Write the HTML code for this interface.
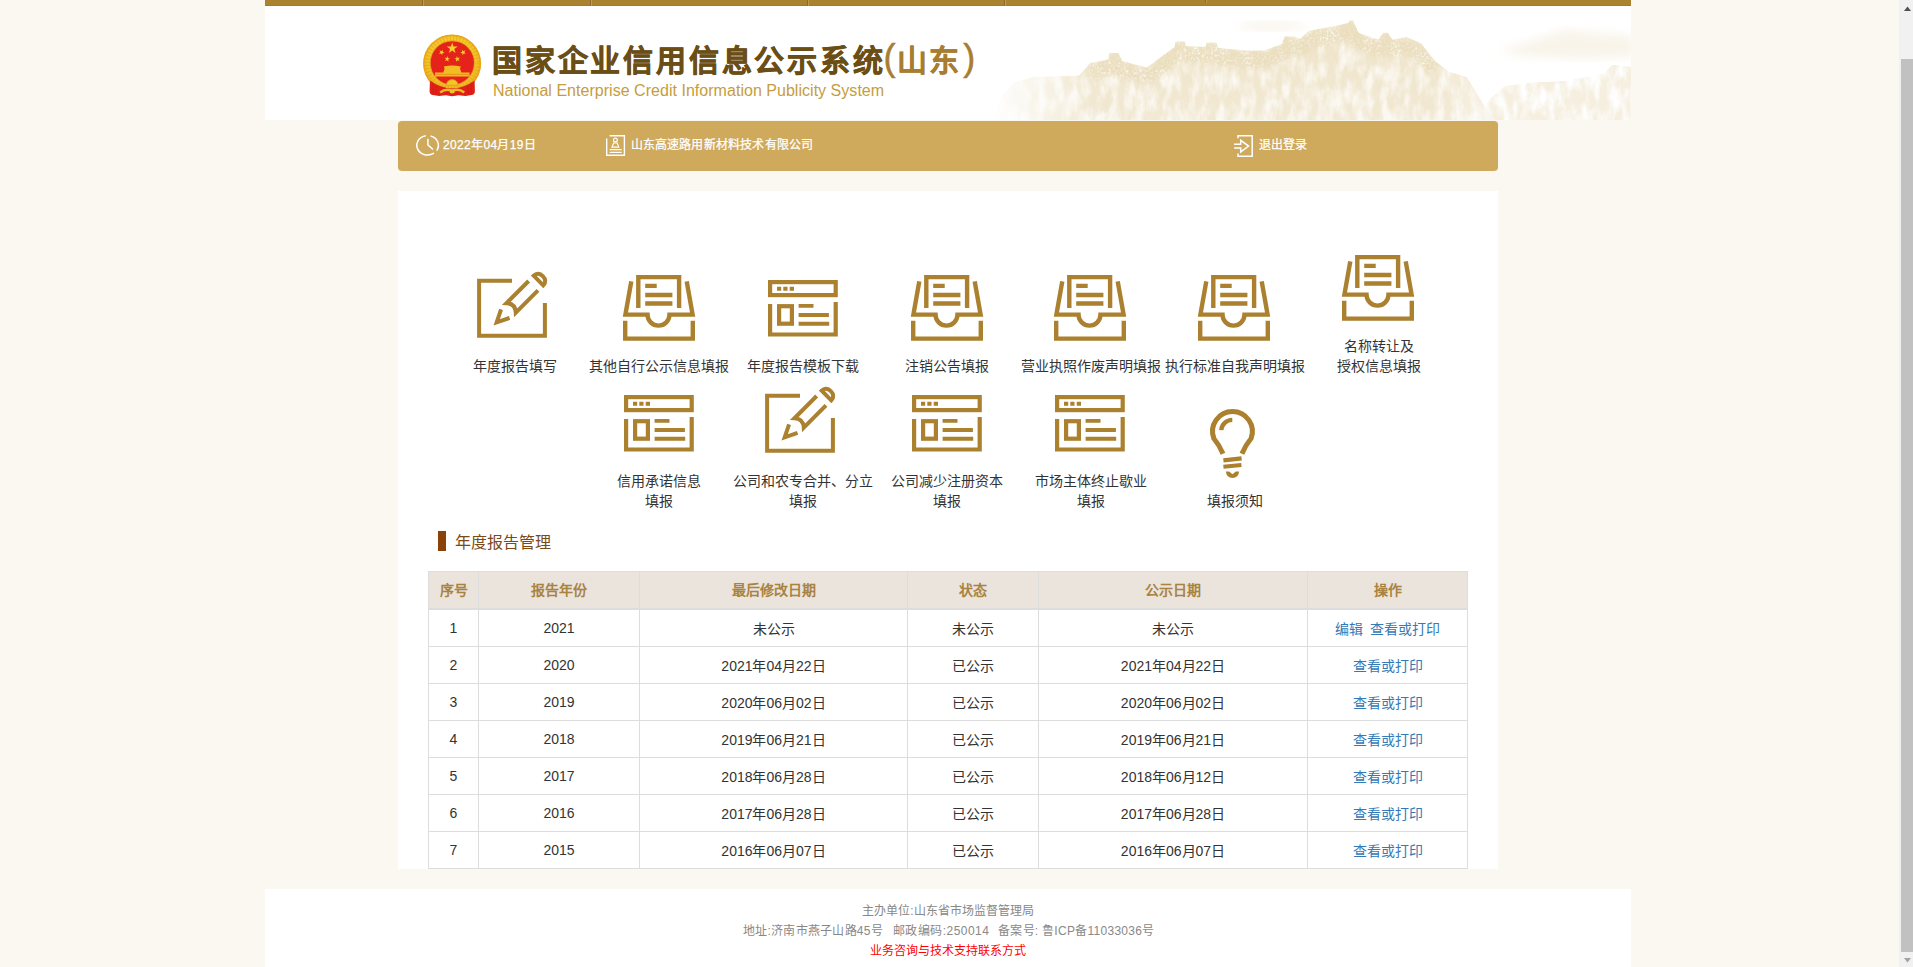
<!DOCTYPE html>
<html lang="zh-CN">
<head>
<meta charset="utf-8">
<title>国家企业信用信息公示系统(山东)</title>
<style>
*{box-sizing:border-box;margin:0;padding:0}
html,body{width:1913px;height:967px;overflow:hidden}
body{position:relative;background:#fbf8f1;font-family:"Liberation Sans",sans-serif;font-size:14px;color:#333}
.abs{position:absolute}
a{text-decoration:none;color:#337ab7}
/* top nav strip */
#topbar{left:265px;top:0;width:1366px;height:6px;background:#ab8230;border-bottom:1px solid #a67a22}
#topbar i{position:absolute;top:0;width:2px;height:6px;background:linear-gradient(90deg,#8d6a25 50%,#c39a4a 50%)}
/* header */
#header{left:265px;top:6px;width:1366px;height:114px;background:#fff;overflow:hidden}
#title{left:492px;top:41px;height:40px;line-height:40px;font-size:30px;font-weight:bold;color:#6b4e16;letter-spacing:2.8px;white-space:nowrap;-webkit-text-stroke:0.6px #6b4e16}
#title span{color:#a87d2f;font-weight:bold;-webkit-text-stroke:0.3px #a87d2f;margin-left:-2px}
#title b:first-child{margin-right:1px}
#title b:last-child{margin-left:1px}
#title b{font-size:36px;line-height:1px;font-weight:normal;position:relative;top:-1.5px;letter-spacing:0;-webkit-text-stroke:0.5px #a87d2f}
#subtitle{left:493px;top:81px;height:20px;line-height:20px;font-size:16px;letter-spacing:0.03px;color:#c59d3d;white-space:nowrap}
/* gold bar */
#bar{left:398px;top:121px;width:1100px;height:50px;background:#cfa95c;border-radius:4px}
.bt{position:absolute;top:136px;height:18px;line-height:18px;font-size:12px;color:#fff;white-space:nowrap;-webkit-text-stroke:.25px #fff}
/* panel */
#panel{left:398px;top:191px;width:1100px;height:678px;background:#fff}
.lbl{position:absolute;width:160px;text-align:center;font-size:14px;line-height:20px;color:#333;white-space:nowrap}
.ico{position:absolute;overflow:visible}
#secbar{left:438px;top:531px;width:8px;height:20px;background:#8b4208}
#sectitle{left:455px;top:532px;height:22px;line-height:22px;font-size:16px;color:#7a4a17;white-space:nowrap}
/* table */
#tbl{left:428px;top:571px;width:1040px;border-collapse:separate;border-spacing:0;border-top:1px solid #ddd;border-left:1px solid #ddd;table-layout:fixed;background:#fff}
#tbl th,#tbl td{border-right:1px solid #ddd;border-bottom:1px solid #ddd;text-align:center;vertical-align:middle;font-size:14px;white-space:nowrap;overflow:hidden}
#tbl th{height:38px;background:#ebe4dd;color:#a88342;font-weight:bold;padding-bottom:3px;border-bottom:2px solid #ddd}
#tbl td{height:37px;color:#333}
/* footer */
#footer{left:265px;top:889px;width:1366px;height:78px;background:#fff;text-align:center;font-size:12px;color:#888}
#footer div{position:absolute;left:0;width:1366px;height:20px;line-height:20px;white-space:pre}
/* scrollbar */
#sb{left:1899px;top:0;width:14px;height:967px;background:#f1f1f1}
#sbthumb{left:1901px;top:59px;width:12px;height:893px;background:#c1c1c1}
</style>
</head>
<body>

<!-- top strip -->
<div id="topbar" class="abs"><i style="left:157px"></i><i style="left:325px"></i><i style="left:542px"></i><i style="left:739px"></i><i style="left:940px;height:3px"></i></div>

<!-- header -->
<div id="header" class="abs">
<!--MOUNTAINS-START-->
<svg class="abs" style="left:0;top:0" width="1366" height="114" viewBox="265 6 1366 114">
<defs>
<linearGradient id="mg" x1="0" y1="20" x2="0" y2="120" gradientUnits="userSpaceOnUse"><stop offset="0" stop-color="#efe3c8"/><stop offset="0.5" stop-color="#f1e7cf"/><stop offset="1" stop-color="#f3ead6"/></linearGradient>
<linearGradient id="fl" x1="992" y1="0" x2="1090" y2="0" gradientUnits="userSpaceOnUse"><stop offset="0" stop-color="#fff" stop-opacity="1"/><stop offset="1" stop-color="#fff" stop-opacity="0"/></linearGradient>
<linearGradient id="fr" x1="1440" y1="0" x2="1500" y2="0" gradientUnits="userSpaceOnUse"><stop offset="0" stop-color="#fff" stop-opacity="0"/><stop offset="1" stop-color="#fff" stop-opacity=".55"/></linearGradient>
<clipPath id="mc"><path d="M990 120 L997 112 L1003 95 L1015 82.5 L1033 77 L1079 75.5 L1090 63 L1108 59.5 L1109.5 53 L1118.5 53 L1122 61 L1147 67.5 L1165 54 L1174.5 47 L1175.5 41.5 L1184.5 41.5 L1186 46 L1205.5 47 L1206.5 42.5 L1216.5 42.5 L1218 48 L1246.5 50.5 L1264 50.5 L1282 44 L1284.8 36.2 L1293.7 36.2 L1300 38.9 L1308.8 31 L1318 29 L1335 26 L1348 22.9 L1350 20.5 L1353 20.5 L1358.7 32.7 L1378 39.8 L1383.5 32.7 L1388 32.7 L1392.4 39.8 L1406.6 37.1 L1420.9 43.3 L1435 61.1 L1449.3 71.8 L1467 77.1 L1477.7 94.9 L1488.4 110.9 L1496 120Z"/></clipPath>
<clipPath id="mc2"><path d="M1480 120 L1488.4 100.2 L1504.4 86 L1531 82.4 L1566.6 80.7 L1602 73.5 L1612.8 64.7 L1631 66.4 L1631 120Z"/></clipPath>
<filter id="rock" x="0" y="0" width="100%" height="100%">
<feTurbulence type="fractalNoise" baseFrequency="0.11 0.045" numOctaves="4" seed="11" result="n"/>
<feColorMatrix in="n" type="matrix" values="0 0 0 0 1  0 0 0 0 1  0 0 0 0 1  2.6 0 0 0 -0.95" result="w"/>
<feComposite in="w" in2="SourceGraphic" operator="in"/>
</filter>
<filter id="dark" x="0" y="0" width="100%" height="100%">
<feTurbulence type="fractalNoise" baseFrequency="0.16 0.07" numOctaves="3" seed="23" result="n"/>
<feColorMatrix in="n" type="matrix" values="0 0 0 0 0.87  0 0 0 0 0.79  0 0 0 0 0.6  2.4 0 0 0 -0.9" result="w"/>
<feComposite in="w" in2="SourceGraphic" operator="in"/>
</filter>
<filter id="tree" x="-5%" y="-30%" width="110%" height="160%">
<feTurbulence type="fractalNoise" baseFrequency="0.45 0.4" numOctaves="2" seed="5" result="n"/>
<feColorMatrix in="n" type="matrix" values="0 0 0 0 0.82  0 0 0 0 0.72  0 0 0 0 0.5  3.4 0 0 0 -0.9" result="w"/>
<feGaussianBlur in="SourceGraphic" stdDeviation="2.5" result="sb"/>
<feComposite in="w" in2="sb" operator="in"/>
</filter>
<filter id="bl4"><feGaussianBlur stdDeviation="5"/></filter>
</defs>
<path d="M1498 52Q1535 40 1567 29Q1600 34 1634 36V57Q1560 62 1498 52Z" fill="#f3ead6" opacity=".5" filter="url(#bl4)"/>
<ellipse cx="1272" cy="26" rx="34" ry="5" fill="#f3ead6" opacity=".45" filter="url(#bl4)"/>
<g clip-path="url(#mc2)" opacity=".68">
<path d="M1480 120 L1488.4 100.2 L1504.4 86 L1531 82.4 L1566.6 80.7 L1602 73.5 L1612.8 64.7 L1631 66.4 L1631 120Z" fill="#f2e8d2"/>
<rect x="1475" y="60" width="160" height="62" fill="#fff" filter="url(#rock)"/>
</g>
<g clip-path="url(#mc)">
<path d="M990 120 L997 112 L1003 95 L1015 82.5 L1033 77 L1079 75.5 L1090 63 L1108 59.5 L1109.5 53 L1118.5 53 L1122 61 L1147 67.5 L1165 54 L1174.5 47 L1175.5 41.5 L1184.5 41.5 L1186 46 L1205.5 47 L1206.5 42.5 L1216.5 42.5 L1218 48 L1246.5 50.5 L1264 50.5 L1282 44 L1284.8 36.2 L1293.7 36.2 L1300 38.9 L1308.8 31 L1318 29 L1335 26 L1348 22.9 L1350 20.5 L1353 20.5 L1358.7 32.7 L1378 39.8 L1383.5 32.7 L1388 32.7 L1392.4 39.8 L1406.6 37.1 L1420.9 43.3 L1435 61.1 L1449.3 71.8 L1467 77.1 L1477.7 94.9 L1488.4 110.9 L1496 120Z" fill="url(#mg)"/>
<rect x="985" y="15" width="520" height="107" fill="#000" filter="url(#dark)" opacity=".55"/>
<rect x="985" y="15" width="520" height="107" fill="#fff" filter="url(#rock)" opacity=".7"/>
<path d="M1090 72 L1108 68.5 L1109.5 62 L1118.5 62 L1122 70 L1147 76.5 L1165 63 L1174.5 56 L1175.5 50.5 L1184.5 50.5 L1186 55 L1205.5 56 L1206.5 51.5 L1216.5 51.5 L1218 57 L1246.5 59.5 L1264 59.5 L1282 53 L1284.8 45.2 L1293.7 45.2 L1300 47.9 L1308.8 40 L1318 38 L1335 35 L1348 31.9 L1350 29.5 L1353 29.5 L1358.7 41.7 L1378 48.8 L1383.5 41.7 L1388 41.7 L1392.4 48.8 L1406.6 46.1 L1420.9 52.3 L1435 70.1" fill="none" stroke="#000" stroke-width="17" stroke-linejoin="round" filter="url(#tree)" opacity=".9"/>
<path d="M985 15H1095V121H985Z" fill="url(#fl)"/>
<path d="M1440 15H1500V121H1440Z" fill="url(#fr)"/>
</g>
</svg>
<!--MOUNTAINS-END-->
</div>
<!--EMBLEM-START-->
<svg class="abs" style="left:422px;top:33px" width="60" height="64" viewBox="0 0 60 64">
<defs>
<radialGradient id="eg" cx="0.5" cy="0.45" r="0.55"><stop offset="0.7" stop-color="#f6c928"/><stop offset="1" stop-color="#e9a81c"/></radialGradient>
<path id="st" d="M0 -1L0.225 -0.309L0.951 -0.309L0.363 0.118L0.588 0.809L0 0.382L-0.588 0.809L-0.363 0.118L-0.951 -0.309L-0.225 -0.309Z"/>
</defs>
<circle cx="30.1" cy="30.5" r="29" fill="url(#eg)"/>
<circle cx="30.1" cy="30.5" r="28.2" fill="none" stroke="#e7a61e" stroke-width="1.2"/>
<circle cx="30.2" cy="30.3" r="25.2" fill="none" stroke="#dc9716" stroke-width="5.4" stroke-dasharray="1 2.3" opacity=".45"/>
<circle cx="30.3" cy="29.9" r="22.1" fill="none" stroke="#e09a16" stroke-width=".8"/>
<circle cx="30.3" cy="29.9" r="21.7" fill="#e6231a"/>
<g fill="#f7cf2e">
<use href="#st" transform="translate(30.2 15.3) scale(5.8)"/>
<use href="#st" transform="translate(19.6 19.4) rotate(25) scale(3)"/>
<use href="#st" transform="translate(41.2 19.4) rotate(-25) scale(3)"/>
<use href="#st" transform="translate(25.2 26) rotate(10) scale(3)"/>
<use href="#st" transform="translate(35.3 26) rotate(-10) scale(3)"/>
</g>
<path d="M21.3 39.4L22.6 35.4L21.8 33.5Q30.2 31.5 38.8 33.5L38 35.4L39.3 39.4H47.5V43.6H13V39.4Z" fill="#f2bd22"/>
<path d="M13 41.4H47.5" stroke="#e39a16" stroke-width="1"/>
<path d="M7.9 47.5Q30.2 63.4 52.6 47.5L52.9 58.5Q52.6 61.6 49.5 62L43.5 63.1L36.6 62.2L30.2 63.3L23.8 62.2L17 63.1L11 62Q7.9 61.6 7.6 58.5Z" fill="#df2018"/>
<path d="M24.3 52.3A5.9 5.9 0 0 1 36.1 52.3Z" fill="#f4c526" stroke="#e09816" stroke-width=".7"/>
<path d="M18.2 59.4Q24 54.8 30.2 57.9Q36.4 54.8 42.2 59.4" fill="none" stroke="#f0bb22" stroke-width="2.5"/>
<ellipse cx="30.2" cy="58.4" rx="2.6" ry="2" fill="#f3c226"/>
<path d="M11 50.5V61M14 52.5V62M46.4 52.5V62M49.4 50.5V61" stroke="#c8150f" stroke-width=".8" opacity=".6"/>
</svg>
<!--EMBLEM-END-->
<div id="title" class="abs">国家企业信用信息公示系统<span><b>(</b>山东<b>)</b></span></div>
<div id="subtitle" class="abs">National Enterprise Credit Information Publicity System</div>

<!-- gold bar -->
<div id="bar" class="abs"></div>
<!--BARICONS-START-->
<svg class="abs" style="left:410px;top:130px" width="40" height="32" viewBox="0 0 40 32" fill="none" stroke="#fff" stroke-width="1.5">
<path d="M15.8 5.79A10.8 9.7 0 1 0 23.95 23.2M20.6 6.03A10.8 9.7 0 0 1 26.7 20.57"/>
<path d="M17.9 8.8V14.9L23 19.5"/>
</svg>
<svg class="abs" style="left:600px;top:130px" width="32" height="32" viewBox="0 0 32 32" fill="none" stroke="#fff" stroke-width="1.4">
<path d="M6.7 8.5V25.2H24.4V5.7H9.6"/>
<circle cx="15.4" cy="10" r="1.9" stroke-width="1.2"/>
<path d="M12 17.2L13.6 13H17.2L18.8 17.2Z" stroke-width="1.2"/>
<path d="M9.6 19.6H21.7M9.6 22.3H21.7" stroke-width="1.2"/>
</svg>
<svg class="abs" style="left:1228px;top:130px" width="32" height="32" viewBox="0 0 32 32" fill="none" stroke="#fff" stroke-width="1.5">
<path d="M10 8.2V5.8H24.2V26.2H10V23.6"/>
<path d="M6.1 14.2H12.7V10.3L20.6 16.1L12.7 21.9V18H6.1"/>
</svg>
<!--BARICONS-END-->
<div class="bt" style="left:443px;letter-spacing:.35px">2022年04月19日</div>
<div class="bt" style="left:630.5px;letter-spacing:.2px">山东高速路用新材料技术有限公司</div>
<div class="bt" style="left:1259px">退出登录</div>

<!-- panel -->
<div id="panel" class="abs"></div>
<!--ICONS-START-->
<svg width="0" height="0" style="position:absolute">
<defs>
<g id="i-inbox" fill="none" stroke="#ab802e" stroke-width="4.4" stroke-linejoin="miter" stroke-linecap="butt">
<path d="M15.3 32.9V2.1H56.1V32.9"/>
<path d="M8.3 6.3L2.4 39.6H24.5A11 11 0 0 0 46.5 39.6H69.6L63.7 6.3"/>
<path d="M2.2 45.8V63.6H69.8V45.8"/>
<path d="M22.2 10.9H33.7M22.2 20H49.4M22.2 28.5H49.4" stroke-width="4.3"/>
</g>
<g id="i-browser" fill="none" stroke="#ab802e" stroke-width="4.2" stroke-linejoin="miter" stroke-linecap="butt">
<rect x="2.1" y="2.1" width="65.6" height="13"/>
<path d="M2.1 24.1V54.5H67.7V21.9"/>
<rect x="11.1" y="26.2" width="12.8" height="17.5"/>
<path d="M30.6 25.9H45.5M30.6 35H60.9M30.6 43.7H61.2" stroke-width="3.9"/>
<path d="M9 8.8H13.2M15.3 8.8H19.5M21.7 8.8H26" stroke-width="3.9"/>
</g>
<g id="i-edit" fill="none" stroke="#ab802e" stroke-width="4" stroke-linejoin="miter" stroke-linecap="butt">
<path d="M35 9.8H2.1V64.8H67.9V32"/>
<g transform="translate(16.3 54.7) rotate(-45)">
<path d="M17 -6L4.8 0L17 6"/>
<path d="M56.6 -6.6H25.2Q31.2 0 25.2 6.6H56.6"/>
<path d="M63.9 -6.8V6.8C68 6.8 70 4 70 0C70 -4 68 -6.8 63.9 -6.8Z"/>
</g>
</g>
<g id="i-bulb" fill="none" stroke="#ab802e" stroke-width="5" stroke-linejoin="round" stroke-linecap="butt">
<path d="M31 53.8C27.6 45.8 24.8 42 21.86 38.5A19.9 19.9 0 1 1 59.04 38.5C56.1 42 53.3 45.8 49.9 53.8"/>
<path d="M29.2 30.2A11.2 11.2 0 0 1 40.3 19.9" stroke-width="4.3"/>
<path d="M31.4 60.4L49.6 58.4M31.4 66.8L49.4 65" stroke-width="4.1"/>
<path d="M33.9 71.4H37.2L40.5 74.2L43.8 71.4H47.1Q46.6 77.9 40.5 77.9Q34.4 77.9 33.9 71.4Z" fill="#ab802e" stroke="none"/>
</g>
</defs>
</svg>
<svg class="ico" style="left:477px;top:271px" width="72" height="68"><use href="#i-edit"/></svg>
<svg class="ico" style="left:623px;top:275px" width="72" height="66"><use href="#i-inbox"/></svg>
<svg class="ico" style="left:768px;top:280px" width="70" height="57"><use href="#i-browser"/></svg>
<svg class="ico" style="left:911px;top:275px" width="72" height="66"><use href="#i-inbox"/></svg>
<svg class="ico" style="left:1054px;top:275px" width="72" height="66"><use href="#i-inbox"/></svg>
<svg class="ico" style="left:1198px;top:275px" width="72" height="66"><use href="#i-inbox"/></svg>
<svg class="ico" style="left:1342px;top:255px" width="72" height="66"><use href="#i-inbox"/></svg>
<svg class="ico" style="left:624px;top:395px" width="70" height="57"><use href="#i-browser"/></svg>
<svg class="ico" style="left:765px;top:386px" width="72" height="68"><use href="#i-edit"/></svg>
<svg class="ico" style="left:912px;top:395px" width="70" height="57"><use href="#i-browser"/></svg>
<svg class="ico" style="left:1055px;top:395px" width="70" height="57"><use href="#i-browser"/></svg>
<svg class="ico" style="left:1192px;top:400px" width="80" height="80"><use href="#i-bulb"/></svg>
<!--ICONS-END-->

<div class="lbl" style="left:435px;top:356px">年度报告填写</div>
<div class="lbl" style="left:579px;top:356px">其他自行公示信息填报</div>
<div class="lbl" style="left:723px;top:356px">年度报告模板下载</div>
<div class="lbl" style="left:867px;top:356px">注销公告填报</div>
<div class="lbl" style="left:1011px;top:356px">营业执照作废声明填报</div>
<div class="lbl" style="left:1155px;top:356px">执行标准自我声明填报</div>
<div class="lbl" style="left:1299px;top:336px">名称转让及<br>授权信息填报</div>
<div class="lbl" style="left:579px;top:471px">信用承诺信息<br>填报</div>
<div class="lbl" style="left:723px;top:471px">公司和农专合并、分立<br>填报</div>
<div class="lbl" style="left:867px;top:471px">公司减少注册资本<br>填报</div>
<div class="lbl" style="left:1011px;top:471px">市场主体终止歇业<br>填报</div>
<div class="lbl" style="left:1155px;top:491px">填报须知</div>

<div id="secbar" class="abs"></div>
<div id="sectitle" class="abs">年度报告管理</div>

<table id="tbl" class="abs">
<colgroup><col style="width:50px"><col style="width:161px"><col style="width:268px"><col style="width:131px"><col style="width:269px"><col style="width:160px"></colgroup>
<tr><th>序号</th><th>报告年份</th><th>最后修改日期</th><th>状态</th><th>公示日期</th><th>操作</th></tr>
<tr><td>1</td><td>2021</td><td>未公示</td><td>未公示</td><td>未公示</td><td><a>编辑</a>&nbsp;&nbsp;<a>查看或打印</a></td></tr>
<tr><td>2</td><td>2020</td><td>2021年04月22日</td><td>已公示</td><td>2021年04月22日</td><td><a>查看或打印</a></td></tr>
<tr><td>3</td><td>2019</td><td>2020年06月02日</td><td>已公示</td><td>2020年06月02日</td><td><a>查看或打印</a></td></tr>
<tr><td>4</td><td>2018</td><td>2019年06月21日</td><td>已公示</td><td>2019年06月21日</td><td><a>查看或打印</a></td></tr>
<tr><td>5</td><td>2017</td><td>2018年06月28日</td><td>已公示</td><td>2018年06月12日</td><td><a>查看或打印</a></td></tr>
<tr><td>6</td><td>2016</td><td>2017年06月28日</td><td>已公示</td><td>2017年06月28日</td><td><a>查看或打印</a></td></tr>
<tr><td>7</td><td>2015</td><td>2016年06月07日</td><td>已公示</td><td>2016年06月07日</td><td><a>查看或打印</a></td></tr>
</table>

<!-- footer -->
<div id="footer" class="abs">
<div style="top:12px">主办单位:山东省市场监督管理局</div>
<div style="top:32px;text-align:left"><span style="position:absolute;left:478px;letter-spacing:.25px">地址:济南市燕子山路45号</span><span style="position:absolute;left:628px;letter-spacing:.45px">邮政编码:250014</span><span style="position:absolute;left:733px;letter-spacing:.28px">备案号: 鲁ICP备11033036号</span></div>
<div style="top:52px;color:#f00">业务咨询与技术支持联系方式</div>
</div>

<!-- scrollbar -->
<div id="sb" class="abs"></div>
<div id="sbthumb" class="abs"></div>
<svg class="abs" style="left:1899px;top:0" width="14" height="967" viewBox="0 0 14 967">
<path d="M5 11 L8.5 6.6 L12 11 Z" fill="#505050"/>
<path d="M5 958 L8.5 962.4 L12 958 Z" fill="#a3a3a3"/>
</svg>

</body>
</html>
